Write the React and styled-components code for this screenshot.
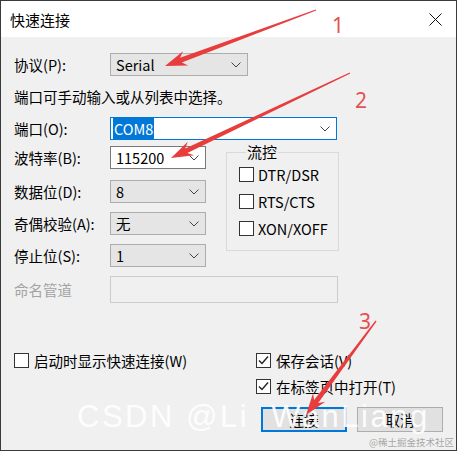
import React from "react";
import styled, { createGlobalStyle, css } from "styled-components";

const GlobalStyle = createGlobalStyle`
  html, body { margin: 0; padding: 0; background: #ffffff; }
  body { font-family: "Noto Sans CJK SC", "Noto Sans", sans-serif; }
`;

const Window = styled.div`
  position: relative;
  width: 457px;
  height: 451px;
  box-sizing: border-box;
  border: 1px solid #3a3a3a;
  background: #f0f0f0;
  display: flex;
  flex-direction: column;
  overflow: hidden;
  font-family: "Noto Sans CJK SC", sans-serif;
  font-size: 14.5px;
  color: #000;
`;

const TitleBar = styled.div`
  height: 36px;
  flex-shrink: 0;
  background: #ffffff;
  display: flex;
  align-items: center;
  justify-content: space-between;
  padding-left: 9px;
`;

const Title = styled.span`
  font-size: 15px;
  line-height: 20px;
  margin-top: 2px;
`;

const CloseBtn = styled.div`
  width: 42px;
  height: 36px;
  display: flex;
  align-items: center;
  justify-content: center;
`;

const Body = styled.div`
  flex: 1;
  display: flex;
  flex-direction: column;
  padding: 16px 13px 0 13px;
`;

const FieldRow = styled.div`
  display: flex;
  align-items: center;
  margin-top: ${(p) => p.$mt || 0}px;
`;

const Label = styled.span`
  width: 96px;
  flex-shrink: 0;
  line-height: 20px;
  color: ${(p) => (p.$disabled ? "#a3a3a3" : "#000")};
`;

const variants = {
  gray: css`
    background: #e5e5e5;
    border: 1px solid #adadad;
  `,
  white: css`
    background: #ffffff;
    border: 1px solid #7a7a7a;
  `,
  focus: css`
    background: #ffffff;
    border: 1px solid #0078d7;
    padding-left: 2px;
  `,
  disabled: css`
    background: #f0f0f0;
    border: 1px solid #cccccc;
  `,
};

const Combo = styled.div`
  box-sizing: border-box;
  width: ${(p) => p.$w}px;
  height: ${(p) => p.$h || 23}px;
  display: flex;
  align-items: center;
  padding-left: 5px;
  padding-right: 6px;
  line-height: 18px;
  ${(p) => variants[p.$variant]}
`;

const ComboText = styled.span`
  flex: 1;
`;

const Selected = styled.span`
  background: #0078d7;
  color: #fff;
  padding: 0 1px;
  line-height: 18px;
`;

const Hint = styled.div`
  margin-top: 11px;
  line-height: 20px;
`;

const Columns = styled.div`
  display: flex;
  align-items: flex-start;
  gap: 20px;
  margin-top: 6px;
`;

const LeftCol = styled.div`
  display: flex;
  flex-direction: column;
`;

const GroupBox = styled.fieldset`
  box-sizing: border-box;
  width: 113px;
  height: 107px;
  margin: -2px 0 0 0;
  padding: 7px 0 0 12px;
  border: 1px solid #d9d9d9;
  display: flex;
  flex-direction: column;
  gap: 12px;
`;

const Legend = styled.legend`
  font-size: 15px;
  line-height: 16px;
  padding: 0 1px;
  margin-left: 7px;
`;

const CheckRow = styled.label`
  display: flex;
  align-items: center;
  gap: ${(p) => p.$gap || 4}px;
  height: 15px;
  line-height: 18px;
  white-space: nowrap;
`;

const Box = styled.span`
  box-sizing: border-box;
  width: 15px;
  height: 15px;
  flex-shrink: 0;
  background: #fff;
  border: 1px solid #333;
  display: flex;
  align-items: center;
  justify-content: center;
`;

const Options = styled.div`
  display: grid;
  grid-template-columns: 242px 1fr;
  row-gap: 11px;
  margin-top: 50px;
`;

const Buttons = styled.div`
  display: flex;
  justify-content: flex-end;
  gap: 10px;
  margin-top: 13px;
`;

const Button = styled.div`
  box-sizing: border-box;
  width: 86px;
  height: 25px;
  display: flex;
  align-items: center;
  justify-content: center;
  background: #e1e1e1;
  border: ${(p) => (p.$primary ? "2px solid #0078d7" : "1px solid #adadad")};
`;

const Overlay = styled.svg`
  position: absolute;
  left: -1px;
  top: -1px;
  width: 457px;
  height: 451px;
  pointer-events: none;
`;

const Watermark = styled.div`
  position: absolute;
  left: 76px;
  top: 400px;
  font-family: "Liberation Sans", Arial, sans-serif;
  font-size: 31px;
  line-height: 31px;
  letter-spacing: 2.5px;
  white-space: pre;
  color: rgba(255, 255, 255, 0.92);
  pointer-events: none;
`;

const Credit = styled.div`
  position: absolute;
  right: 2px;
  bottom: 2px;
  font-family: "Noto Sans CJK SC", sans-serif;
  font-size: 9.5px;
  line-height: 11px;
  color: rgba(150, 150, 150, 0.85);
`;

const Chevron = () => (
  <svg width="10" height="6" viewBox="0 0 10 6">
    <polyline points="0.5,0.5 5,5 9.5,0.5" fill="none" stroke="#444" strokeWidth="1" />
  </svg>
);

const Check = () => (
  <svg width="13" height="13" viewBox="0 0 13 13">
    <polyline points="2,6.5 5,9.5 11,2.5" fill="none" stroke="#222" strokeWidth="1.4" />
  </svg>
);

const CheckBox = ({ checked, children, gap }) => (
  <CheckRow $gap={gap}>
    <Box>{checked && <Check />}</Box>
    <span>{children}</span>
  </CheckRow>
);

function arrow(sx, sy, tx, ty, o = {}) {
  const { tail = 1.2, shaft = 5, headLen = 22, headW = 15, notch = 5 } = o;
  const dx = tx - sx;
  const dy = ty - sy;
  const L = Math.hypot(dx, dy);
  const ux = dx / L;
  const uy = dy / L;
  const nx = -uy;
  const ny = ux;
  const p = (a, s) => `${(sx + ux * a + nx * s).toFixed(1)},${(sy + uy * a + ny * s).toFixed(1)}`;
  return [
    p(0, tail / 2),
    p(L - headLen + notch, shaft / 2),
    p(L - headLen, headW / 2),
    p(L, 0),
    p(L - headLen, -headW / 2),
    p(L - headLen + notch, -shaft / 2),
    p(0, -tail / 2),
  ].join(" ");
}

const RED = "#e83d3d";

export default function App() {
  return (
    <>
      <GlobalStyle />
      <Window>
        <TitleBar>
          <Title>快速连接</Title>
          <CloseBtn>
            <svg width="13" height="13" viewBox="0 0 13 13">
              <path d="M0.5 0.5 L12.5 12.5 M12.5 0.5 L0.5 12.5" stroke="#111" strokeWidth="1" />
            </svg>
          </CloseBtn>
        </TitleBar>
        <Body>
          <FieldRow>
            <Label>协议(P):</Label>
            <Combo $w={138} $variant="gray">
              <ComboText>Serial</ComboText>
              <Chevron />
            </Combo>
          </FieldRow>
          <Hint>端口可手动输入或从列表中选择。</Hint>
          <FieldRow $mt={10}>
            <Label>端口(O):</Label>
            <Combo $w={227} $variant="focus">
              <ComboText>
                <Selected>COM8</Selected>
              </ComboText>
              <Chevron />
            </Combo>
          </FieldRow>
          <Columns>
            <LeftCol>
              <FieldRow>
                <Label>波特率(B):</Label>
                <Combo $w={96} $variant="white">
                  <ComboText>115200</ComboText>
                  <Chevron />
                </Combo>
              </FieldRow>
              <FieldRow $mt={11}>
                <Label>数据位(D):</Label>
                <Combo $w={96} $variant="gray">
                  <ComboText>8</ComboText>
                  <Chevron />
                </Combo>
              </FieldRow>
              <FieldRow $mt={9}>
                <Label>奇偶校验(A):</Label>
                <Combo $w={96} $variant="gray">
                  <ComboText>无</ComboText>
                  <Chevron />
                </Combo>
              </FieldRow>
              <FieldRow $mt={9}>
                <Label>停止位(S):</Label>
                <Combo $w={96} $variant="gray">
                  <ComboText>1</ComboText>
                  <Chevron />
                </Combo>
              </FieldRow>
            </LeftCol>
            <GroupBox>
              <Legend>流控</Legend>
              <CheckBox>DTR/DSR</CheckBox>
              <CheckBox>RTS/CTS</CheckBox>
              <CheckBox>XON/XOFF</CheckBox>
            </GroupBox>
          </Columns>
          <FieldRow $mt={9}>
            <Label $disabled>命名管道</Label>
            <Combo $w={228} $h={27} $variant="disabled" />
          </FieldRow>
          <Options>
            <CheckBox gap={5}>启动时显示快速连接(W)</CheckBox>
            <CheckBox gap={5} checked>保存会话(V)</CheckBox>
            <span />
            <CheckBox gap={5} checked>在标签页中打开(T)</CheckBox>
          </Options>
          <Buttons>
            <Button $primary>连接</Button>
            <Button>取消</Button>
          </Buttons>
        </Body>

        <Watermark>{"CSDN @Li  WanLiang"}</Watermark>
        <Credit>@稀土掘金技术社区</Credit>

        <Overlay viewBox="0 0 457 451">
          <polygon points={arrow(316, 10, 165, 66)} fill={RED} />
          <polygon points={arrow(350, 73, 171, 158)} fill={RED} />
          <polygon points={arrow(376, 321, 306, 415)} fill={RED} />
          <text x="338" y="33" fill="#e55050" fontSize="21" textAnchor="middle" fontFamily="Noto Sans, sans-serif">1</text>
          <text x="361" y="108" fill="#e55050" fontSize="21" textAnchor="middle" fontFamily="Noto Sans, sans-serif">2</text>
          <text x="365" y="329" fill="#e55050" fontSize="21" textAnchor="middle" fontFamily="Noto Sans, sans-serif">3</text>
        </Overlay>
      </Window>
    </>
  );
}
